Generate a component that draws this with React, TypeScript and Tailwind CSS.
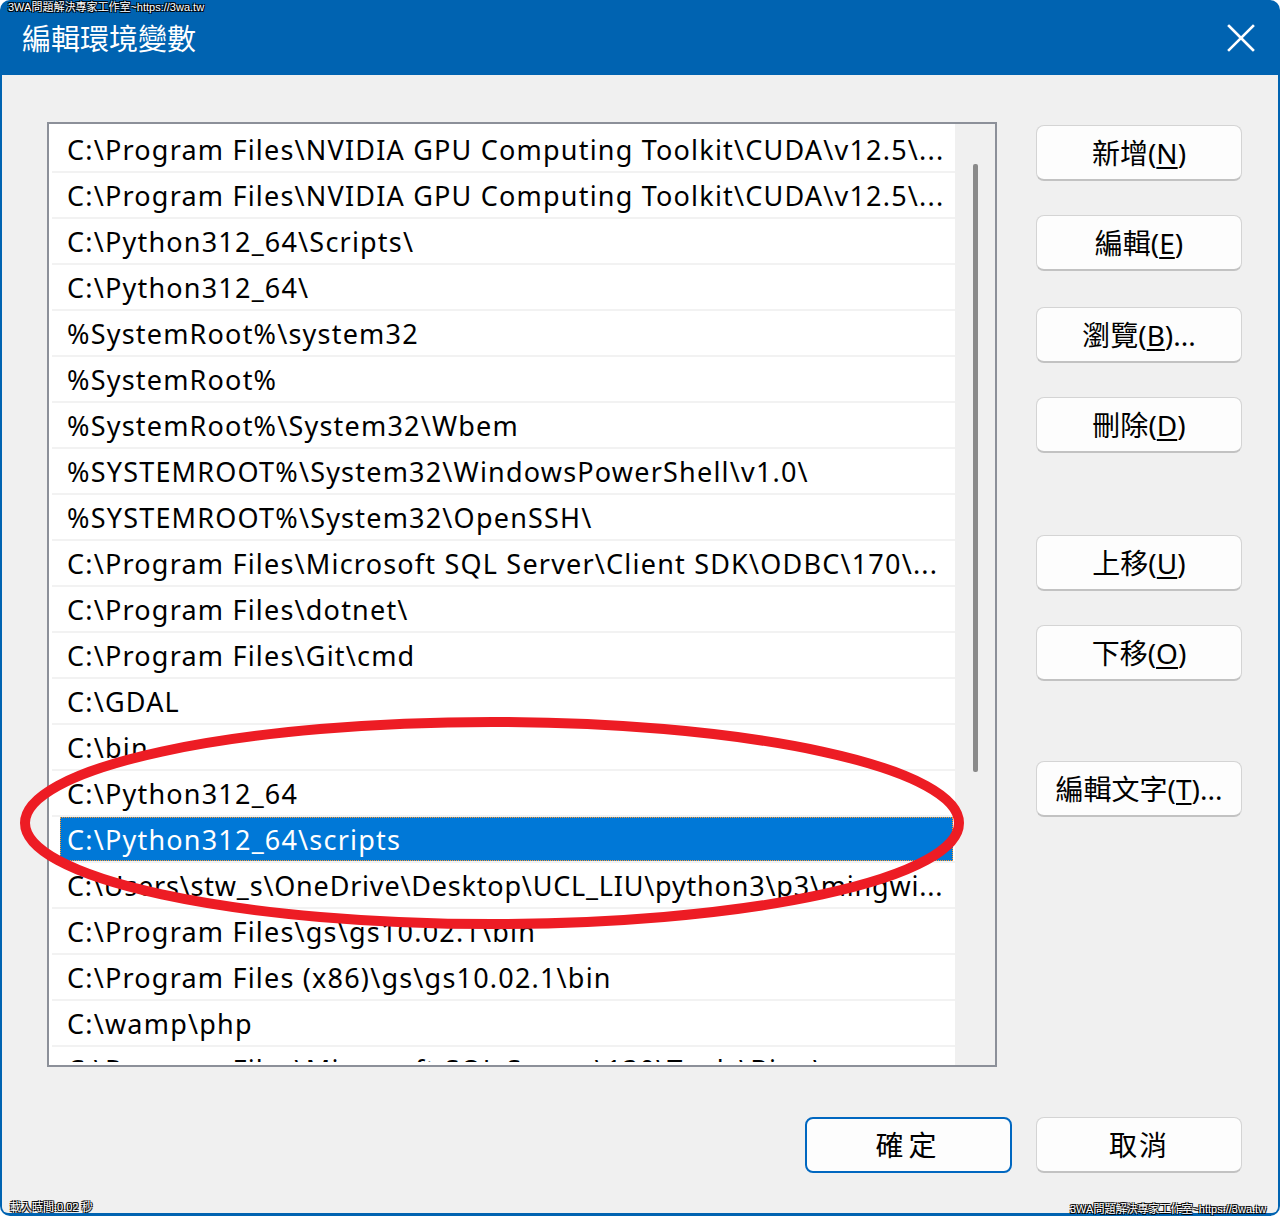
import React from "react";

const rows = [
  "C:\\Program Files\\NVIDIA GPU Computing Toolkit\\CUDA\\v12.5\\...",
  "C:\\Program Files\\NVIDIA GPU Computing Toolkit\\CUDA\\v12.5\\...",
  "C:\\Python312_64\\Scripts\\",
  "C:\\Python312_64\\",
  "%SystemRoot%\\system32",
  "%SystemRoot%",
  "%SystemRoot%\\System32\\Wbem",
  "%SYSTEMROOT%\\System32\\WindowsPowerShell\\v1.0\\",
  "%SYSTEMROOT%\\System32\\OpenSSH\\",
  "C:\\Program Files\\Microsoft SQL Server\\Client SDK\\ODBC\\170\\...",
  "C:\\Program Files\\dotnet\\",
  "C:\\Program Files\\Git\\cmd",
  "C:\\GDAL",
  "C:\\bin",
  "C:\\Python312_64",
  "C:\\Python312_64\\scripts",
  "C:\\Users\\stw_s\\OneDrive\\Desktop\\UCL_LIU\\python3\\p3\\mingwi...",
  "C:\\Program Files\\gs\\gs10.02.1\\bin",
  "C:\\Program Files (x86)\\gs\\gs10.02.1\\bin",
  "C:\\wamp\\php",
  "C:\\Program Files\\Microsoft SQL Server\\130\\Tools\\Binn\\",
];

const SEL = 15;

const listFont = { fontFamily: '"Noto Sans", "Open Sans", sans-serif' };
const cjkFont = { fontFamily: '"Noto Sans", "Noto Sans CJK TC", sans-serif' };

function Btn({ label, mn, suffix, extra }: { label: string; mn?: string; suffix?: string; extra?: string }) {
  return (
    <div
      className={`w-[206px] h-[56px] rounded-[8px] bg-[#fdfdfd] border border-[#d4d4d4] border-b-[#c2c2c2] border-b-2 flex items-center justify-center text-[28px] text-black leading-none ${extra ?? ""}`}
      style={cjkFont}
    >
      <span>{label}</span>
      {mn && (
        <span>
          (<span className="underline underline-offset-[3px] decoration-[2px]">{mn}</span>)
        </span>
      )}
      {suffix && <span>{suffix}</span>}
    </div>
  );
}

function Watermark({ text, className }: { text: string; className: string }) {
  return (
    <div
      className={`absolute text-[11px] leading-none text-white whitespace-nowrap ${className}`}
      style={{
        fontFamily: '"Liberation Sans", "Noto Sans CJK TC", sans-serif',
        textShadow: "1px 1px 0 #000, -1px -1px 0 #000, 1px -1px 0 #000, -1px 1px 0 #000",
      }}
    >
      {text}
    </div>
  );
}

export default function App() {
  return (
    <div className="w-[1280px] h-[1216px] bg-white relative overflow-hidden">
      <div className="w-[1280px] h-[1216px] rounded-[10px] bg-[#0063b1] flex flex-col">
        {/* Title bar */}
        <div className="h-[75px] flex items-center justify-between shrink-0">
          <div className="ml-[22px] text-white text-[29px] leading-none mt-[2px]" style={cjkFont}>
            編輯環境變數
          </div>
          <svg width="28" height="28" viewBox="0 0 28 28" className="mr-[25px] mt-[1px]">
            <path d="M2 2 L26 26 M26 2 L2 26" stroke="#fff" strokeWidth="2.6" strokeLinecap="square" />
          </svg>
        </div>
        {/* Body */}
        <div className="flex-1 mx-[2px] mb-[3px] bg-[#f0f0f0] rounded-b-[6px] flex flex-col">
          <div className="flex pt-[47px] pl-[45px]">
            {/* List box */}
            <div className="w-[950px] h-[945px] border-2 border-[#8c9099] bg-white flex p-[3px] pr-0 pt-[3px]">
              <div className="flex-1 overflow-hidden" style={listFont}>
                {rows.map((r, i) => (
                  <div key={i} className="h-[46px] border-b-2 border-[#f2f2f2] flex items-center shrink-0">
                    {i === SEL ? (
                      <div className="ml-[8px] mr-[2px] h-[44px] flex-1 bg-[#0078d7] border border-dotted border-[#ff9a30] flex items-center">
                        <span className="ml-[6px] text-white text-[27px] tracking-[1.2px] whitespace-nowrap leading-none">{r}</span>
                      </div>
                    ) : (
                      <span
                        className={`ml-[15px] text-black text-[27px] whitespace-nowrap leading-none ${
                          i === 16 ? "tracking-[0.8px]" : "tracking-[1.2px]"
                        }`}
                      >
                        {r}
                      </span>
                    )}
                  </div>
                ))}
              </div>
              <div className="w-[40px] bg-[#f0f0f0] flex justify-center pt-[40px] -my-[3px]">
                <div className="w-[5px] h-[608px] bg-[#8a8a8a] rounded-[2px]" />
              </div>
            </div>
            {/* Buttons */}
            <div className="ml-[39px] flex flex-col pt-[3px]">
              <Btn label="新增" mn="N" />
              <Btn label="編輯" mn="E" extra="mt-[34px]" />
              <Btn label="瀏覽" mn="B" suffix="..." extra="mt-[36px]" />
              <Btn label="刪除" mn="D" extra="mt-[34px]" />
              <Btn label="上移" mn="U" extra="mt-[82px]" />
              <Btn label="下移" mn="O" extra="mt-[34px]" />
              <Btn label="編輯文字" mn="T" suffix="..." extra="mt-[80px]" />
            </div>
          </div>
          <div className="flex justify-end pr-[36px] mt-[50px] gap-[24px]">
            <div
              className="w-[207px] h-[56px] rounded-[8px] bg-[#fdfdfd] border-2 border-[#0067c0] flex items-center justify-center text-[28px] tracking-[5px] text-black"
              style={cjkFont}
            >
              確定
            </div>
            <div
              className="w-[206px] h-[56px] rounded-[8px] bg-[#fdfdfd] border border-[#d4d4d4] border-b-2 border-b-[#c2c2c2] flex items-center justify-center text-[28px] tracking-[2px] text-black"
              style={cjkFont}
            >
              取消
            </div>
          </div>
        </div>
      </div>

      {/* Red ellipse annotation */}
      <svg className="absolute left-0 top-0 pointer-events-none" width="1280" height="1216">
        <ellipse cx="492" cy="823" rx="467" ry="101" fill="none" stroke="#ed1c24" strokeWidth="10" />
      </svg>

      <Watermark text="3WA問題解決專家工作室~https://3wa.tw" className="left-[8px] top-[2px]" />
      <Watermark text="載入時間:0.02 秒" className="left-[10px] top-[1202px]" />
      <Watermark text="3WA問題解決專家工作室~https://3wa.tw" className="left-[1070px] top-[1204px]" />
    </div>
  );
}
